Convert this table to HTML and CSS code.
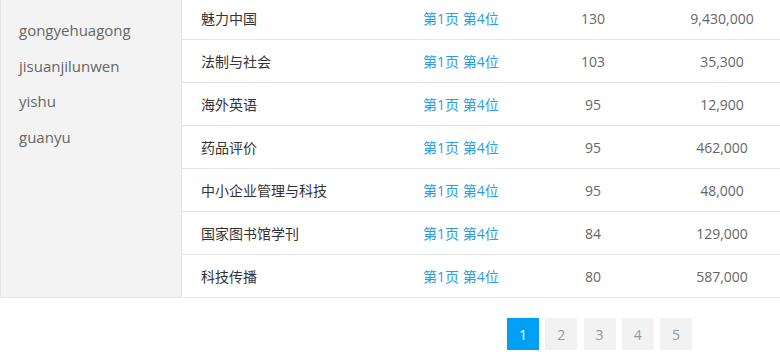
FILE: index.html
```html
<!DOCTYPE html>
<html lang="zh">
<head>
<meta charset="utf-8">
<title>List</title>
<link rel="stylesheet" href="styles.css">
</head>
<body>
<div class="wrap">
  <div class="main">
    <aside class="side">
      <a class="side-item">gongyehuagong</a>
      <a class="side-item">jisuanjilunwen</a>
      <a class="side-item">yishu</a>
      <a class="side-item">guanyu</a>
    </aside>
    <div class="table">
      <div class="row"><span class="c-name">魅力中国</span><span class="c-pos">第1页 第4位</span><span class="c-num">130</span><span class="c-val">9,430,000</span></div>
      <div class="row"><span class="c-name">法制与社会</span><span class="c-pos">第1页 第4位</span><span class="c-num">103</span><span class="c-val">35,300</span></div>
      <div class="row"><span class="c-name">海外英语</span><span class="c-pos">第1页 第4位</span><span class="c-num">95</span><span class="c-val">12,900</span></div>
      <div class="row"><span class="c-name">药品评价</span><span class="c-pos">第1页 第4位</span><span class="c-num">95</span><span class="c-val">462,000</span></div>
      <div class="row"><span class="c-name">中小企业管理与科技</span><span class="c-pos">第1页 第4位</span><span class="c-num">95</span><span class="c-val">48,000</span></div>
      <div class="row"><span class="c-name">国家图书馆学刊</span><span class="c-pos">第1页 第4位</span><span class="c-num">84</span><span class="c-val">129,000</span></div>
      <div class="row"><span class="c-name">科技传播</span><span class="c-pos">第1页 第4位</span><span class="c-num">80</span><span class="c-val">587,000</span></div>
    </div>
  </div>
  <nav class="pager">
    <a class="page active">1</a>
    <a class="page">2</a>
    <a class="page">3</a>
    <a class="page">4</a>
    <a class="page">5</a>
  </nav>
</div>
</body>
</html>
```
FILE: styles.css
```css
* { box-sizing: border-box; }
html, body { margin: 0; padding: 0; background: #fff; }
body {
  font-family: "Open Sans", "Noto Sans CJK SC", sans-serif;
  font-size: 14px;
  color: #333;
  overflow: hidden;
}
.wrap { margin-top: -3px; }
.main {
  display: flex;
  border-bottom: 1px solid #e5e5e5;
}
.side {
  width: 182px;
  flex: none;
  background: #f3f3f3;
  border-left: 1px solid #e5e5e5;
  border-right: 1px solid #e5e5e5;
  padding: 16px 0 0 18px;
  display: flex;
  flex-direction: column;
}
.side-item {
  line-height: 35.7px;
  color: #666;
  font-size: 15px;
}
.table { flex: 1; }
.row {
  display: grid;
  grid-template-columns: 241px 120px 100px 1fr;
  height: 43px;
  align-items: center;
  border-bottom: 1px solid #e5e5e5;
}
.row:last-child { border-bottom: none; height: 42px; }
.c-name { padding-left: 19px; color: #333; }
.c-pos { color: #2b9be6; }
.c-num { text-align: center; color: #666; }
.c-val { text-align: center; padding-left: 21px; color: #666; }
.pager {
  display: flex;
  gap: 6.25px;
  padding: 20px 0 0 507px;
}
.page {
  width: 32px;
  height: 32px;
  display: flex;
  align-items: center;
  justify-content: center;
  background: #f2f2f2;
  color: #999;
  font-size: 14px;
}
.page.active { background: #00a0f5; color: #fff; }
```
